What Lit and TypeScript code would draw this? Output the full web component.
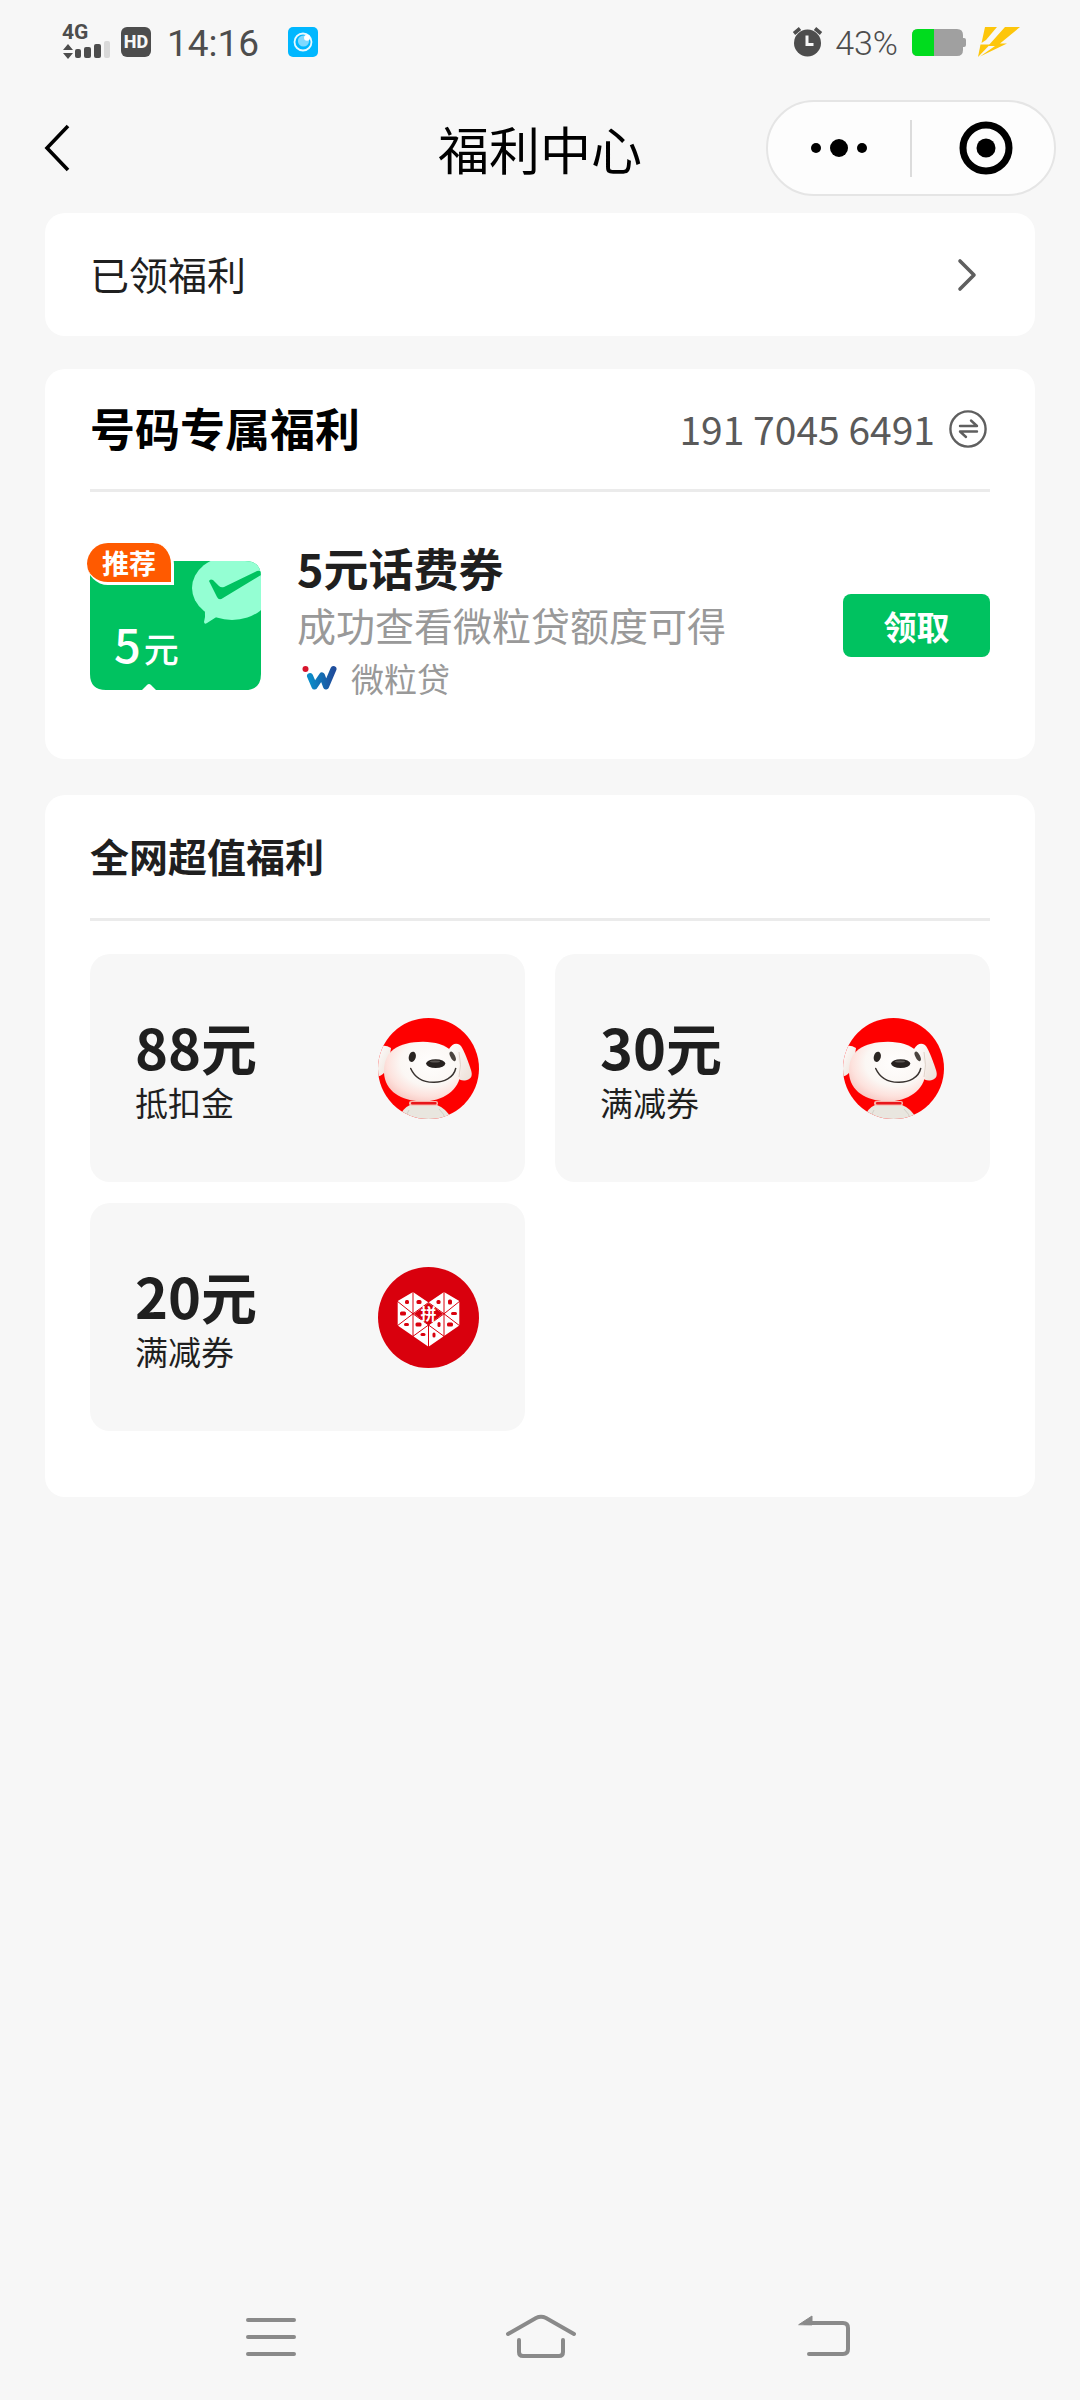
import { LitElement, html, css, svg } from "lit";
import { customElement, property } from "lit/decorators.js";

const fontStack = css`"Noto Sans CJK SC", sans-serif`;

interface Offer {
  amount: string;
  kind: string;
  logo: "dog" | "heart";
}

const offers: Offer[] = [
  { amount: "88元", kind: "抵扣金", logo: "dog" },
  { amount: "30元", kind: "满减券", logo: "dog" },
  { amount: "20元", kind: "满减券", logo: "heart" },
];

@customElement("status-bar")
class StatusBar extends LitElement {
  static styles = css`
    :host {
      display: flex;
      align-items: center;
      justify-content: space-between;
      height: 84px;
      padding: 0 60px 0 62px;
      font-family: Roboto, ${fontStack};
      color: #4d4d4d;
    }
    .side {
      display: flex;
      align-items: center;
    }
    svg {
      display: block;
      flex: none;
    }
    .net {
      display: grid;
      width: 50px;
      margin-right: 9px;
    }
    .gen {
      font-size: 21px;
      line-height: 17px;
      font-weight: 700;
    }
    .hd {
      display: grid;
      place-items: center;
      width: 30px;
      height: 30px;
      border-radius: 6px;
      background: #4d4d4d;
      color: #f7f7f7;
      font-size: 18px;
      line-height: 30px;
      font-weight: 800;
    }
    .time {
      margin: 0 29px 0 16px;
      padding-top: 4px;
      font-size: 37px;
      line-height: 44px;
    }
    .percent {
      margin: 0 14px 0 12px;
      padding-top: 2px;
      font-size: 34px;
      line-height: 40px;
      font-weight: 300;
    }
    .bolt {
      margin-left: 12px;
    }
  `;
  render() {
    return html`
      <div class="side">
        <div class="net">
          <span class="gen">4G</span>
          <svg width="50" height="19" viewBox="0 0 50 19">
            <path d="M1 9L6 3L11 9ZM1 12H11L6 18Z" fill="#4d4d4d" />
            <g fill="#4d4d4d">
              <rect x="13" y="8" width="6" height="9" rx="2" />
              <rect x="22" y="6" width="7" height="11" rx="2" />
              <rect x="32" y="3" width="7" height="14" rx="2" />
            </g>
            <rect x="42" y="0" width="6" height="17" rx="2" fill="#d9d9d9" />
          </svg>
        </div>
        <span class="hd">HD</span>
        <time class="time">14:16</time>
        <svg width="30" height="30" viewBox="0 0 30 30">
          <rect width="30" height="30" rx="5" fill="#00b7ff" />
          <circle cx="15" cy="15" r="8.5" fill="none" stroke="#e8f9ff" stroke-width="1.8" />
          <circle cx="15.5" cy="14" r="5.6" fill="#7fd9ff" />
          <circle cx="19" cy="10.8" r="3" fill="#fff" />
        </svg>
      </div>
      <div class="side">
        <svg width="31" height="30" viewBox="0 0 31 30">
          <circle cx="15.5" cy="16" r="13.5" fill="#4d4d4d" />
          <path d="M2 6.5L8 1.5M29 6.5L23 1.5" stroke="#4d4d4d" stroke-width="3.6" />
          <path d="M15 8.5V17.5H21.5" fill="none" stroke="#f7f7f7" stroke-width="3" />
        </svg>
        <span class="percent">43%</span>
        <svg width="54" height="27" viewBox="0 0 54 27">
          <path d="M6 0H45Q51 0 51 6V9H52Q54 9 54 11V16Q54 18 52 18H51V21Q51 27 45 27H6Q0 27 0 21V6Q0 0 6 0Z" fill="#a0a0a0" />
          <path d="M6 0H22V27H6Q0 27 0 21V6Q0 0 6 0Z" fill="#00dc1e" />
        </svg>
        <svg class="bolt" width="42" height="30" viewBox="0 0 42 30">
          <path d="M7 0H19L8 13L3.500 16Z" fill="#fdc60b" />
          <path d="M2.500 17.500H12L0 30Z" fill="#fdc60b" />
          <path d="M27 0H42L22 16.500H29L2 29.500L17 19H10Z" fill="#fdc60b" />
        </svg>
      </div>
    `;
  }
}

@customElement("nav-header")
class NavHeader extends LitElement {
  static styles = css`
    :host {
      display: grid;
      grid-template-columns: 1fr auto 1fr;
      align-items: center;
      padding: 16px 24px 17px;
      font-family: ${fontStack};
    }
    button {
      display: grid;
      place-items: center;
      border: 0;
      padding: 0;
      background: none;
      cursor: pointer;
    }
    svg {
      display: block;
    }
    .back {
      width: 66px;
      height: 72px;
    }
    h1 {
      margin: 0;
      font-size: 51px;
      line-height: 72px;
      font-weight: 400;
      color: #000;
    }
    .capsule {
      justify-self: end;
      display: grid;
      grid-template-columns: 142px 2px 1fr;
      align-items: center;
      box-sizing: border-box;
      width: 290px;
      height: 96px;
      border: 2px solid #e5e5e5;
      border-radius: 48px;
      background: #fdfdfd;
    }
    .capsule button {
      height: 92px;
    }
    .capsule .close {
      padding-left: 6px;
    }
    .rule {
      width: 2px;
      height: 57px;
      background: #dcdcdc;
    }
  `;
  render() {
    return html`
      <button class="back" aria-label="返回">
        <svg width="28" height="50" viewBox="0 0 28 50">
          <path d="M25 3L4 25L25 47" fill="none" stroke="#000" stroke-width="3.600" />
        </svg>
      </button>
      <h1>福利中心</h1>
      <div class="capsule">
        <button aria-label="更多">
          <svg width="56" height="18" viewBox="0 0 56 18">
            <circle cx="5" cy="9" r="5" />
            <circle cx="28" cy="9" r="9" />
            <circle cx="51" cy="9" r="5" />
          </svg>
        </button>
        <span class="rule"></span>
        <button class="close" aria-label="关闭">
          <svg width="54" height="54" viewBox="0 0 54 54">
            <circle cx="27" cy="27" r="23" fill="none" stroke="#000" stroke-width="7" />
            <circle cx="27" cy="27" r="9.500" />
          </svg>
        </button>
      </div>
    `;
  }
}

@customElement("coupon-ticket")
class CouponTicket extends LitElement {
  static styles = css`
    :host {
      display: block;
      position: relative;
      width: 171px;
      height: 129px;
      font-family: ${fontStack};
    }
    svg {
      display: block;
    }
    .value {
      position: absolute;
      left: 24px;
      top: 48px;
      display: flex;
      align-items: baseline;
      gap: 3px;
      color: #fff;
      font-size: 47px;
      line-height: 68px;
      font-weight: 500;
    }
    .unit {
      font-size: 35px;
    }
    .badge {
      position: absolute;
      left: -3px;
      top: -18px;
      width: 84px;
      height: 39px;
      border: 3px solid #fff;
      border-top: 0;
      border-left: 0;
      border-radius: 21px 21px 0 21px;
      background: #ff5a00;
      color: #fff;
      font-size: 27px;
      line-height: 39px;
      font-weight: 700;
      text-align: center;
    }
  `;
  render() {
    return html`
      <svg width="171" height="129" viewBox="0 0 171 129">
        <defs>
          <clipPath id="ticket">
            <path d="M16 0H155Q171 0 171 16V113Q171 129 155 129H66L61 124Q59 122 57 124L52 129H16Q0 129 0 113V16Q0 0 16 0Z" />
          </clipPath>
        </defs>
        <g clip-path="url(#ticket)">
          <rect width="171" height="129" fill="#00c260" />
          <ellipse cx="142" cy="27" rx="40" ry="32" fill="#94ffd3" />
          <path d="M112 44Q117 50 114 61Q114.500 64 117 62L128 55Z" fill="#94ffd3" />
          <path d="M119 20Q120 17.500 123 19L129 25Q131 27 134 26L167 10Q170 9 171 11V14L133 37Q129 40 127 36Z" fill="#00c260" />
        </g>
      </svg>
      <div class="value"><span>5</span><span class="unit">元</span></div>
      <span class="badge">推荐</span>
    `;
  }
}

@customElement("brand-logo")
class BrandLogo extends LitElement {
  @property() name: "dog" | "heart" = "dog";
  static styles = css`
    :host {
      display: block;
      width: 101px;
      height: 101px;
      flex: none;
    }
    svg {
      display: block;
    }
    .mark {
      font-family: ${fontStack};
      font-size: 16px;
      font-weight: 700;
    }
  `;
  dog() {
    return html`
      <svg width="101" height="101" viewBox="0 0 101 101" aria-hidden="true">
        <defs>
          <clipPath id="disc"><circle cx="50.500" cy="50.500" r="50.500" /></clipPath>
          <radialGradient id="head" cx="0.600" cy="0.350" r="0.700">
            <stop offset="0" stop-color="#fffefd" />
            <stop offset="0.550" stop-color="#fbf7f4" />
            <stop offset="0.800" stop-color="#fde2dd" />
            <stop offset="1" stop-color="#f8c8c2" />
          </radialGradient>
          <linearGradient id="ear" x1="0" x2="1" y1="0" y2="1">
            <stop offset="0" stop-color="#fff" />
            <stop offset="1" stop-color="#ecdfd6" />
          </linearGradient>
        </defs>
        <g clip-path="url(#disc)">
          <rect width="101" height="101" fill="#fe0000" />
          <path d="M-2 34Q3 24 13 30L10 50Q5 58 -2 59Z" fill="url(#ear)" />
          <path d="M32 87Q24 90 20 103H75Q68 90 59 87Z" fill="#e9e6df" />
          <path d="M31 92Q28 96 28 102M61 91Q67 96 67 102" fill="none" stroke="#d3cec6" stroke-width="1" />
          <path d="M71 31Q76 23 82 27Q86 31 93 52Q96 61 87 62.500Q82 63 79 59Z" fill="url(#ear)" />
          <path d="M6 55C5 33 20 24 45 23.700C70 24 82 36 82.500 54C82 72 65 83.500 44 83.500C23 83 7 73 6 55Z" fill="url(#head)" />
          <path d="M81 34Q84 47 81 59" fill="none" stroke="#dfd3ca" stroke-width="1" />
          <rect x="31" y="83" width="29" height="4.500" rx="2" fill="#f9b3aa" />
          <rect x="33" y="84" width="25.500" height="2.500" rx="1" fill="#e8161b" />
          <ellipse cx="34.300" cy="38.800" rx="3.500" ry="5.200" transform="rotate(15 34.3 38.8)" fill="#2a2522" />
          <ellipse cx="74.700" cy="38.300" rx="2.300" ry="5.200" transform="rotate(-27 74.7 38.3)" fill="#4a443f" />
          <ellipse cx="57.700" cy="45.600" rx="9.600" ry="4.300" fill="#26211f" />
          <ellipse cx="57" cy="43.500" rx="5" ry="1" fill="#5a5552" />
          <path d="M32.700 50.500C37 60 46 64.500 56 64.300C66 64 75.500 60 77.700 50.500" fill="none" stroke="#3a3431" stroke-width="1.500" stroke-linecap="round" />
        </g>
      </svg>
    `;
  }
  heart() {
    const spots: [number, number, number, number][] = [
      [29, 35, 4, 4],
      [41, 35, 5, 4],
      [25, 46.5, 6, 4],
      [28.5, 57.5, 5, 3],
      [40.5, 57.5, 6, 4],
      [60.5, 35, 4, 4],
      [72, 35, 4, 5],
      [76, 46.5, 6, 3],
      [61, 57.5, 3, 5],
      [72, 57.5, 6, 4],
      [45, 67.5, 5, 3],
      [56, 68, 3, 5],
    ];
    return html`
      <svg width="101" height="101" viewBox="0 0 101 101" aria-hidden="true">
        <circle cx="50.500" cy="50.500" r="50.500" fill="#d9000d" />
        <path d="M19.700 34L35 25L50.500 35.500L66 25L81.300 34V58.500L50.500 79.700L19.700 58.500Z" fill="#fff" />
        <path d="M36 46.800L50.500 36L65 46.800L50.500 58Z" fill="#d9000d" />
        <path
          d="M35 24V70M66 24V70M50.500 58V80M19 34L35 46.800L19 59M82 34L66 46.800L82 59M35 46.800L50.500 35.500L66 46.800L50.500 58ZM50.500 58L34 70M50.500 58L67 70"
          fill="none"
          stroke="#d9000d"
          stroke-width="1"
        />
        ${spots.map(
          ([x, y, w, h]) => svg`<rect x=${x - w / 2} y=${y - h / 2} width=${w} height=${h} rx="1.500" fill="#d9000d" />`
        )}
        <text class="mark" x="50.500" y="53" text-anchor="middle" fill="#fff">拼</text>
      </svg>
    `;
  }
  render() {
    return this.name === "dog" ? this.dog() : this.heart();
  }
}

@customElement("system-nav")
class SystemNav extends LitElement {
  static styles = css`
    :host {
      display: grid;
      grid-template-columns: repeat(3, 1fr);
      justify-items: center;
      align-items: center;
      height: 126px;
      padding: 0 136px;
    }
    button {
      border: 0;
      padding: 0;
      background: none;
      cursor: pointer;
    }
    svg {
      display: block;
      fill: none;
      stroke: #8a8a8a;
      stroke-width: 4;
      stroke-linecap: round;
    }
  `;
  render() {
    return html`
      <button aria-label="最近任务">
        <svg width="80" height="46" viewBox="0 0 80 46">
          <path d="M17 6H63M17 23H63M17 40H63" />
        </svg>
      </button>
      <button aria-label="主页">
        <svg width="80" height="46" viewBox="0 0 80 46">
          <path d="M8 20L36 4Q41 1.500 46 4L74 20M19 26V38Q19 42 23 42H59Q63 42 63 38V26" />
        </svg>
      </button>
      <button aria-label="后退">
        <svg width="84" height="46" viewBox="0 0 84 46">
          <path d="M38 9H76Q81 9 81 14V35Q81 40 76 40H42" />
          <path d="M32 10.500L45 2V10.500Z" fill="#8a8a8a" stroke-width="1" stroke-linejoin="round" />
        </svg>
      </button>
    `;
  }
}

@customElement("app-root")
class AppRoot extends LitElement {
  static styles = css`
    :host {
      display: flex;
      flex-direction: column;
      min-height: 100vh;
      background: #f7f7f7;
      font-family: ${fontStack};
      color: #1f1f1f;
    }
    main {
      display: flex;
      flex-direction: column;
      padding: 0 45px;
    }
    svg {
      display: block;
      flex: none;
    }
    h2,
    h3,
    p {
      margin: 0;
    }
    .card {
      display: block;
      padding: 0 45px;
      border-radius: 20px;
      background: #fff;
    }
    .claimed {
      display: flex;
      align-items: center;
      justify-content: space-between;
      height: 123px;
      margin-bottom: 33px;
      color: inherit;
      font-size: 39px;
      line-height: 56px;
      text-decoration: none;
    }
    .claimed span {
      padding-bottom: 4px;
    }
    .exclusive {
      margin-bottom: 36px;
    }
    .head {
      display: flex;
      align-items: center;
      justify-content: space-between;
      height: 120px;
      border-bottom: 3px solid #ebebeb;
    }
    .head h2 {
      padding-bottom: 2px;
      font-size: 45px;
      line-height: 64px;
      font-weight: 700;
      color: #000;
    }
    .phone {
      display: flex;
      align-items: center;
      gap: 14px;
      border: 0;
      padding: 0 3px 0 0;
      background: none;
      color: #5a5a5a;
      font-family: inherit;
      font-size: 39px;
      line-height: 56px;
      cursor: pointer;
    }
    .phone span {
      padding-bottom: 2px;
    }
    .coupon {
      display: flex;
      align-items: center;
      height: 267px;
    }
    .info {
      flex: 1;
      margin-left: 36px;
      padding-bottom: 8px;
    }
    .info h3 {
      font-size: 45px;
      line-height: 60px;
      font-weight: 700;
    }
    .hint {
      color: #999;
      font-size: 39px;
      line-height: 52px;
    }
    .brand {
      display: flex;
      align-items: center;
      gap: 14px;
      padding-left: 5px;
      color: #999;
      font-size: 33px;
      line-height: 56px;
    }
    .claim {
      width: 147px;
      height: 63px;
      border: 0;
      border-radius: 8px;
      padding: 0;
      background: #00c260;
      color: #fff;
      font-family: inherit;
      font-size: 33px;
      line-height: 60px;
      font-weight: 700;
      cursor: pointer;
    }
    .deals .head {
      height: 123px;
    }
    .deals .head h2 {
      padding-bottom: 4px;
      font-size: 39px;
      line-height: 56px;
      color: #1f1f1f;
    }
    .grid {
      display: grid;
      grid-template-columns: 1fr 1fr;
      gap: 21px 30px;
      padding: 33px 0 66px;
    }
    .tile {
      display: flex;
      align-items: center;
      justify-content: space-between;
      height: 228px;
      box-sizing: border-box;
      padding: 0 46px 0 45px;
      border-radius: 20px;
      background: #f7f7f7;
      color: inherit;
      text-decoration: none;
    }
    .value {
      display: flex;
      flex-direction: column;
      padding-bottom: 4px;
    }
    .amount {
      font-size: 56px;
      line-height: 72px;
      font-weight: 700;
    }
    .kind {
      font-size: 33px;
      line-height: 40px;
    }
    system-nav {
      margin-top: auto;
    }
  `;
  render() {
    return html`
      <status-bar></status-bar>
      <nav-header></nav-header>
      <main>
        <a class="card claimed" href="#claimed">
          <span>已领福利</span>
          <svg width="46" height="36" viewBox="0 0 46 36">
            <path d="M16 4L30 18L16 32" fill="none" stroke="#5f5f5f" stroke-width="3.600" stroke-linecap="round" stroke-linejoin="round" />
          </svg>
        </a>

        <section class="card exclusive">
          <div class="head">
            <h2>号码专属福利</h2>
            <button class="phone" aria-label="切换号码 191 7045 6491">
              <span>191 7045 6491</span>
              <svg width="38" height="38" viewBox="0 0 38 38" fill="none" stroke="#5f5f5f" stroke-width="2.400" stroke-linecap="round" stroke-linejoin="round">
                <circle cx="19" cy="19" r="17.600" />
                <path d="M11 16H28L22 10.500M28 21.500H11L17 27" />
              </svg>
            </button>
          </div>
          <div class="coupon">
            <coupon-ticket></coupon-ticket>
            <div class="info">
              <h3>5元话费券</h3>
              <p class="hint">成功查看微粒贷额度可得</p>
              <p class="brand">
                <svg width="35" height="25" viewBox="0 0 35 25">
                  <defs>
                    <linearGradient id="wave" x1="0" x2="1">
                      <stop offset="0" stop-color="#0a8cc8" />
                      <stop offset="1" stop-color="#1f4d9c" />
                    </linearGradient>
                  </defs>
                  <path d="M8 11L12.500 21.500L20 10.500L24 21.500L31.500 4" fill="none" stroke="url(#wave)" stroke-width="6" stroke-linecap="round" stroke-linejoin="round" />
                  <circle cx="3.500" cy="4" r="3" fill="#d7142c" />
                </svg>
                <span>微粒贷</span>
              </p>
            </div>
            <button class="claim">领取</button>
          </div>
        </section>

        <section class="card deals">
          <div class="head"><h2>全网超值福利</h2></div>
          <div class="grid">
            ${offers.map(
              (o) => html`
                <a class="tile" href="#offer">
                  <span class="value">
                    <span class="amount">${o.amount}</span>
                    <span class="kind">${o.kind}</span>
                  </span>
                  <brand-logo .name=${o.logo}></brand-logo>
                </a>
              `
            )}
          </div>
        </section>
      </main>
      <system-nav></system-nav>
    `;
  }
}
